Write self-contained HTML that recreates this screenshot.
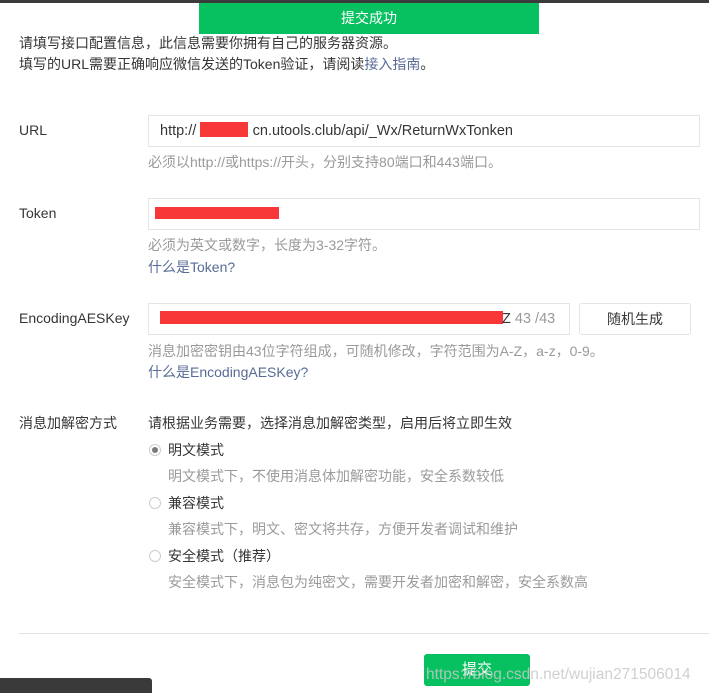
<!DOCTYPE html>
<html><head><meta charset="utf-8"><style>
body{margin:0;width:709px;height:693px;position:relative;overflow:hidden;background:#fff;font-family:"Liberation Sans","Noto Sans CJK SC",sans-serif;font-size:14px;color:#353535}
.a{position:absolute;white-space:nowrap;line-height:18px}
.g{color:#9a9a9a}
.l{color:#576b95}
.in{position:absolute;border:1px solid #e4e4e4;box-sizing:border-box;height:32px}
.red{position:absolute;background:#f83838}
.r{position:absolute;width:12px;height:12px;border:1px solid #ccc;border-radius:50%;box-sizing:border-box;background:#fff}
</style></head><body>
<div style="position:absolute;left:0;top:0;width:709px;height:3px;background:#3b3b3b"></div>
<div style="position:absolute;left:199px;top:3px;width:340px;height:31px;background:#07c160;color:#fff;text-align:center;line-height:31px;font-size:14px">提交成功</div>
<div class="a" style="left:19px;top:34px">请填写接口配置信息，此信息需要你拥有自己的服务器资源。</div>
<div class="a" style="left:19px;top:55px">填写的URL需要正确响应微信发送的Token验证，请阅读<span class="l">接入指南</span>。</div>

<div class="a" style="left:19px;top:121px">URL</div>
<div class="in" style="left:148px;top:115px;width:552px"></div>
<div class="a" style="left:160px;top:122px;font-size:14.5px">http://&nbsp;&nbsp;&nbsp;&nbsp;&nbsp;&nbsp;&nbsp;&nbsp;&nbsp;&nbsp;&nbsp;&nbsp;&nbsp;&nbsp;cn.utools.club/api/_Wx/ReturnWxTonken</div>
<div class="red" style="left:200px;top:122px;width:48px;height:15px"></div>
<div class="a g" style="left:148px;top:153px">必须以http://或https://开头，分别支持80端口和443端口。</div>

<div class="a" style="left:19px;top:204px">Token</div>
<div class="in" style="left:148px;top:198px;width:552px"></div>
<div class="red" style="left:155px;top:207px;width:124px;height:12px"></div>
<div class="a g" style="left:148px;top:236px">必须为英文或数字，长度为3-32字符。</div>
<div class="a" style="left:148px;top:258px;color:#576b95">什么是Token?</div>

<div class="a" style="left:19px;top:309px">EncodingAESKey</div>
<div class="in" style="left:148px;top:303px;width:422px"></div>
<div class="red" style="left:160px;top:311px;width:343px;height:13px"></div>
<div class="a" style="left:502px;top:310px;font-size:14.5px">Z <span class="g">43 /43</span></div>
<div class="in" style="left:579px;top:303px;width:112px;border-radius:3px;text-align:center;line-height:30px">随机生成</div>
<div class="a g" style="left:148px;top:342px">消息加密密钥由43位字符组成，可随机修改，字符范围为A-Z，a-z，0-9。</div>
<div class="a" style="left:148px;top:363px;color:#576b95">什么是EncodingAESKey?</div>

<div class="a" style="left:19px;top:414px">消息加解密方式</div>
<div class="a" style="left:148px;top:414px">请根据业务需要，选择消息加解密类型，启用后将立即生效</div>
<div class="r" style="left:149px;top:444px"><div style="position:absolute;left:2px;top:2px;width:6px;height:6px;border-radius:50%;background:#7a7a7a"></div></div>
<div class="a" style="left:168px;top:441px">明文模式</div>
<div class="a g" style="left:168px;top:467px">明文模式下，不使用消息体加解密功能，安全系数较低</div>
<div class="r" style="left:149px;top:497px"></div>
<div class="a" style="left:168px;top:494px">兼容模式</div>
<div class="a g" style="left:168px;top:520px">兼容模式下，明文、密文将共存，方便开发者调试和维护</div>
<div class="r" style="left:149px;top:550px"></div>
<div class="a" style="left:168px;top:547px">安全模式（推荐）</div>
<div class="a g" style="left:168px;top:573px">安全模式下，消息包为纯密文，需要开发者加密和解密，安全系数高</div>

<div style="position:absolute;left:19px;top:633px;width:690px;height:1px;background:#e4e4e4"></div>
<div style="position:absolute;left:424px;top:654px;width:106px;height:32px;background:#07c160;border-radius:3px;color:#fff;text-align:center;line-height:32px;font-size:15px">提交</div>
<div class="a" style="left:426px;top:666px;color:rgba(200,200,200,0.85);font-size:15.5px">https://blog.csdn.net/wujian271506014</div>
<div style="position:absolute;left:0;top:678px;width:152px;height:15px;background:#3a3a3a;border-top-right-radius:3px"></div>
</body></html>
